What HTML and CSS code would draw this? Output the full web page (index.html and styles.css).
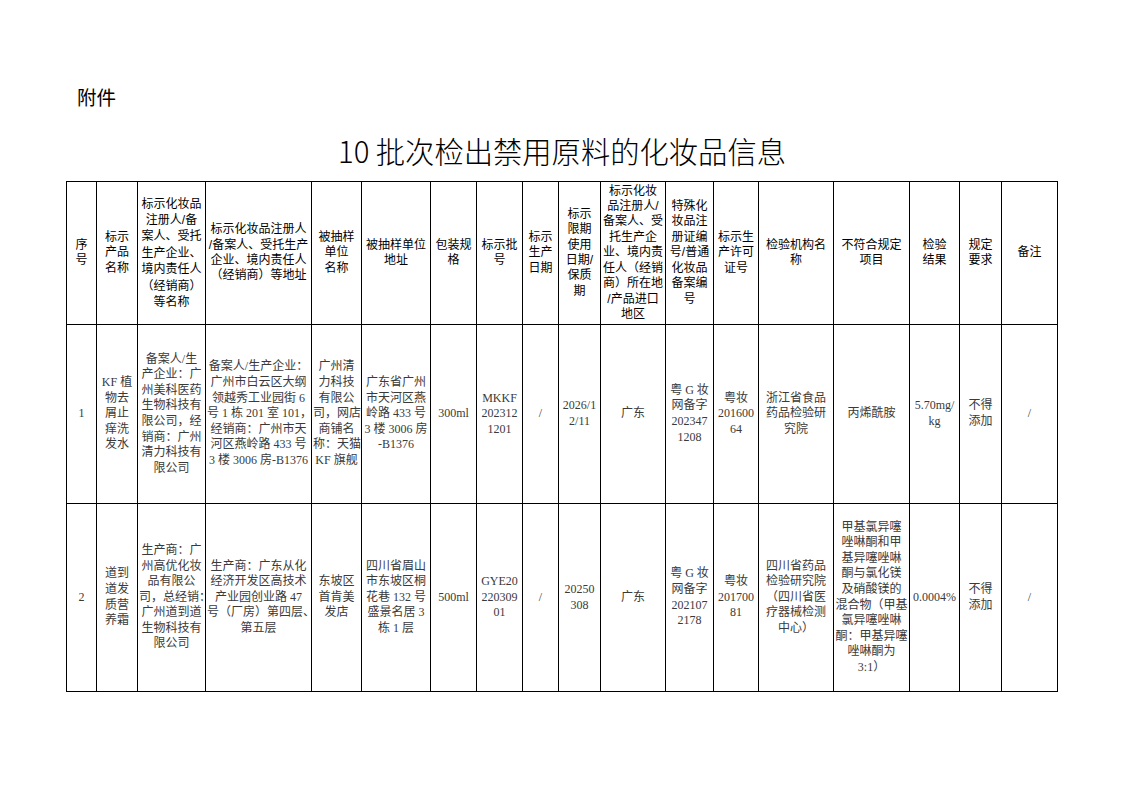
FILE: index.html
```html
<!DOCTYPE html>
<html lang="zh-CN">
<head>
<meta charset="utf-8">
<title>10批次检出禁用原料的化妆品信息</title>
<link rel="stylesheet" href="styles.css">
</head>
<body>
<div class="page">
  <div class="fujian">附件</div>
  <h1 class="title">10 批次检出禁用原料的化妆品信息</h1>
  <table class="info">
    <colgroup>
      <col class="c1"><col class="c2"><col class="c3"><col class="c4"><col class="c5"><col class="c6">
      <col class="c7"><col class="c8"><col class="c9"><col class="c10"><col class="c11"><col class="c12">
      <col class="c13"><col class="c14"><col class="c15"><col class="c16"><col class="c17"><col class="c18">
    </colgroup>
    <thead>
      <tr class="head">
        <th>序<br>号</th>
        <th>标示<br>产品<br>名称</th>
        <th class="h3">标示化妆品<br>注册人/备<br>案人、受托<br>生产企业、<br>境内责任人<br>（经销商）<br>等名称</th>
        <th>标示化妆品注册人<br>/备案人、受托生产<br>企业、境内责任人<br>（经销商）等地址</th>
        <th>被抽样<br>单位<br>名称</th>
        <th>被抽样单位<br>地址</th>
        <th>包装规<br>格</th>
        <th>标示批<br>号</th>
        <th>标示<br>生产<br>日期</th>
        <th>标示<br>限期<br>使用<br>日期/<br>保质<br>期</th>
        <th>标示化妆<br>品注册人/<br>备案人、受<br>托生产企<br>业、境内责<br>任人（经销<br>商）所在地<br>/产品进口<br>地区</th>
        <th>特殊化<br>妆品注<br>册证编<br>号/普通<br>化妆品<br>备案编<br>号</th>
        <th>标示生<br>产许可<br>证号</th>
        <th>检验机构名<br>称</th>
        <th>不符合规定<br>项目</th>
        <th>检验<br>结果</th>
        <th>规定<br>要求</th>
        <th>备注</th>
      </tr>
    </thead>
    <tbody>
      <tr class="row1">
        <td>1</td>
        <td>KF 植<br>物去<br>屑止<br>痒洗<br>发水</td>
        <td>备案人/生<br>产企业：广<br>州美科医药<br>生物科技有<br>限公司，经<br>销商：广州<br>清力科技有<br>限公司</td>
        <td>备案人/生产企业：<br>广州市白云区大纲<br>领越秀工业园街 6<br>号 1 栋 201 室 101，<br>经销商：广州市天<br>河区燕岭路 433 号<br>3 楼 3006 房-B1376</td>
        <td>广州清<br>力科技<br>有限公<br>司，网店<br>商铺名<br>称：天猫<br>KF 旗舰</td>
        <td>广东省广州<br>市天河区燕<br>岭路 433 号<br>3 楼 3006 房<br>-B1376</td>
        <td>300ml</td>
        <td>MKKF<br>202312<br>1201</td>
        <td>/</td>
        <td>2026/1<br>2/11</td>
        <td>广东</td>
        <td>粤 G 妆<br>网备字<br>202347<br>1208</td>
        <td>粤妆<br>201600<br>64</td>
        <td>浙江省食品<br>药品检验研<br>究院</td>
        <td>丙烯酰胺</td>
        <td>5.70mg/<br>kg</td>
        <td>不得<br>添加</td>
        <td>/</td>
      </tr>
      <tr class="row2">
        <td>2</td>
        <td>道到<br>道发<br>质营<br>养霜</td>
        <td>生产商：广<br>州高优化妆<br>品有限公<br>司，总经销：<br>广州道到道<br>生物科技有<br>限公司</td>
        <td>生产商：广东从化<br>经济开发区高技术<br>产业园创业路 47<br>号（厂房）第四层、<br>第五层</td>
        <td>东坡区<br>首肯美<br>发店</td>
        <td>四川省眉山<br>市东坡区桐<br>花巷 132 号<br>盛景名居 3<br>栋 1 层</td>
        <td>500ml</td>
        <td>GYE20<br>220309<br>01</td>
        <td>/</td>
        <td>20250<br>308</td>
        <td>广东</td>
        <td>粤 G 妆<br>网备字<br>202107<br>2178</td>
        <td>粤妆<br>201700<br>81</td>
        <td>四川省药品<br>检验研究院<br>（四川省医<br>疗器械检测<br>中心）</td>
        <td>甲基氯异噻<br>唑啉酮和甲<br>基异噻唑啉<br>酮与氯化镁<br>及硝酸镁的<br>混合物（甲基<br>氯异噻唑啉<br>酮：甲基异噻<br>唑啉酮为<br>3:1）</td>
        <td>0.0004%</td>
        <td>不得<br>添加</td>
        <td>/</td>
      </tr>
    </tbody>
  </table>
</div>
</body>
</html>
```

FILE: styles.css
```css
html, body {
  margin: 0;
  padding: 0;
  background: #ffffff;
}

.page {
  padding: 85px 0 0 66px;
  width: 992px;
}

.fujian {
  font-family: "Noto Sans CJK SC", "Liberation Sans", sans-serif;
  font-size: 19.5px;
  line-height: 24px;
  color: #000;
  padding-left: 11px;
}

.title {
  margin: 22px 0 0 0;
  font-family: "Noto Sans CJK SC", "Liberation Sans", sans-serif;
  font-weight: 300;
  font-size: 29.3px;
  line-height: 38px;
  text-align: center;
  color: #000;
}

.info {
  margin-top: 12px;
  border-collapse: collapse;
  table-layout: fixed;
  width: 991px;
}

.info th,
.info td {
  border: 1px solid #000;
  padding: 0 1px;
  text-align: center;
  vertical-align: middle;
  white-space: nowrap;
  overflow: visible;
}

.info th {
  font-family: "Liberation Sans", "Noto Sans CJK SC", sans-serif;
  font-weight: 400;
  font-size: 12px;
  line-height: 15.4px;
  color: #000;
}

.info th.h3 {
  line-height: 16.4px;
}

.info td {
  font-family: "Liberation Serif", "Noto Sans CJK SC", serif;
  font-size: 12px;
  line-height: 15.6px;
  color: #3a3a3a;
}

.head { height: 143px; }
.row1 { height: 179px; }
.row2 { height: 188px; }

.c1 { width: 30px; }
.c2 { width: 41px; }
.c3 { width: 68px; }
.c4 { width: 106px; }
.c5 { width: 50px; }
.c6 { width: 69px; }
.c7 { width: 46px; }
.c8 { width: 46px; }
.c9 { width: 36px; }
.c10 { width: 42px; }
.c11 { width: 65px; }
.c12 { width: 48px; }
.c13 { width: 45px; }
.c14 { width: 75px; }
.c15 { width: 76px; }
.c16 { width: 50px; }
.c17 { width: 42px; }
.c18 { width: 56px; }
```
